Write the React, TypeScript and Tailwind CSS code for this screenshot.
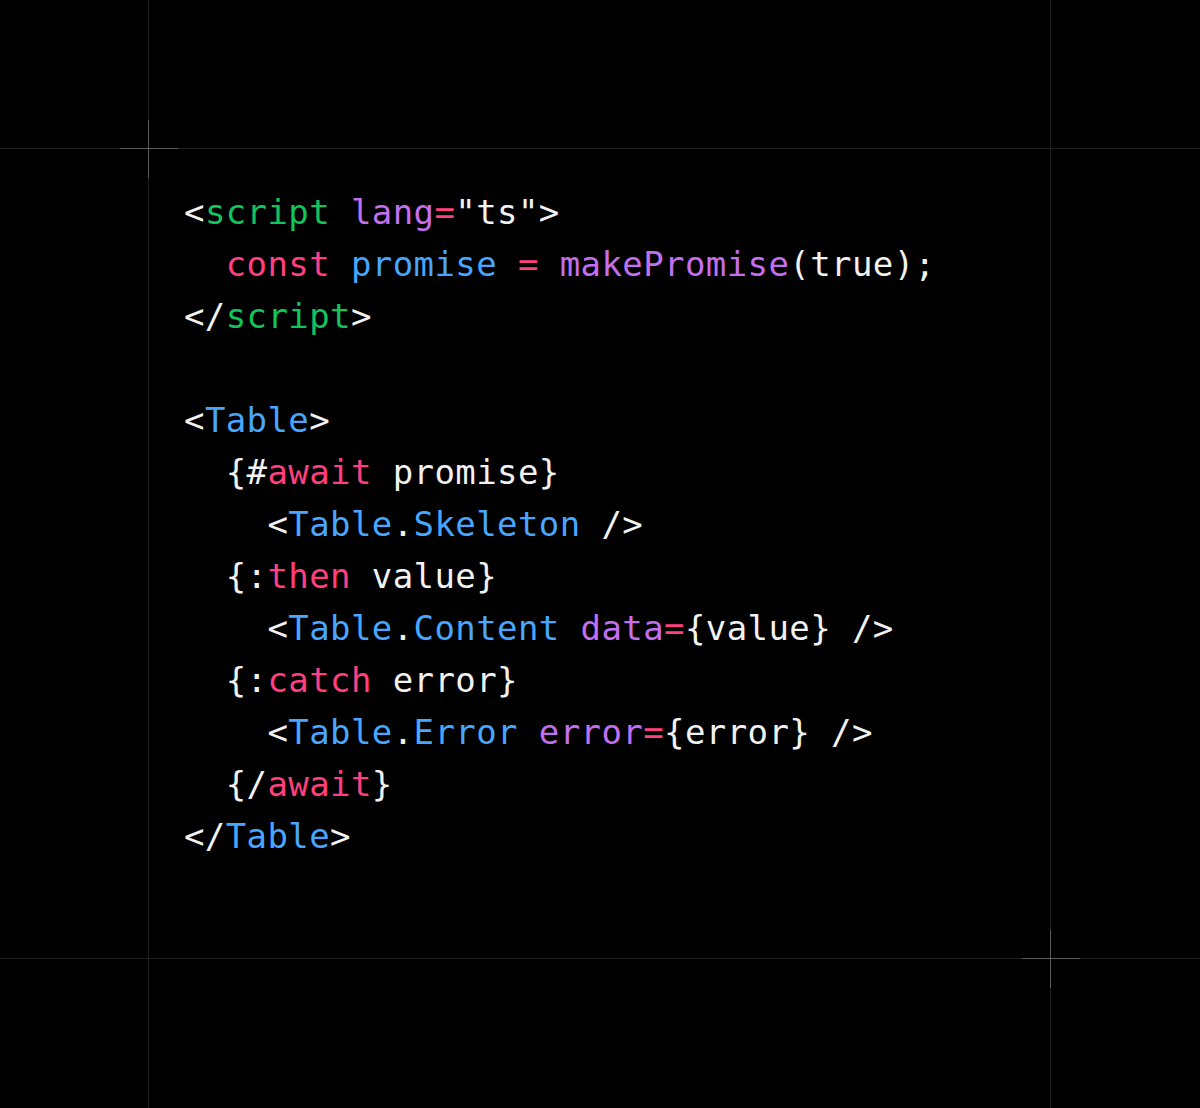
import type { ReactNode } from 'react';

const W = 'text-[#f2f2f2]';
const G = 'text-[#12c45c]';
const P = 'text-[#c26ff0]';
const K = 'text-[#ff3f7f]';
const B = 'text-[#47a6ff]';

type Tok = [string, string];

const lines: Tok[][] = [
  [[W, '<'], [G, 'script'], [W, ' '], [P, 'lang'], [K, '='], [W, '"ts">']],
  [[W, '  '], [K, 'const'], [W, ' '], [B, 'promise'], [W, ' '], [K, '='], [W, ' '], [P, 'makePromise'], [W, '(true);']],
  [[W, '</'], [G, 'script'], [W, '>']],
  [],
  [[W, '<'], [B, 'Table'], [W, '>']],
  [[W, '  {#'], [K, 'await'], [W, ' promise}']],
  [[W, '    <'], [B, 'Table'], [W, '.'], [B, 'Skeleton'], [W, ' />']],
  [[W, '  {:'], [K, 'then'], [W, ' value}']],
  [[W, '    <'], [B, 'Table'], [W, '.'], [B, 'Content'], [W, ' '], [P, 'data'], [K, '='], [W, '{value} />']],
  [[W, '  {:'], [K, 'catch'], [W, ' error}']],
  [[W, '    <'], [B, 'Table'], [W, '.'], [B, 'Error'], [W, ' '], [P, 'error'], [K, '='], [W, '{error} />']],
  [[W, '  {/'], [K, 'await'], [W, '}']],
  [[W, '</'], [B, 'Table'], [W, '>']],
];

// corner marker drawn over the frame lines
function Cross({ className }: { className: string }) {
  return (
    <svg className={`absolute ${className}`} width="58" height="58" viewBox="0 0 58 58">
      <path d="M0 28.5H58M28.5 0V58" stroke="#5c5c5c" strokeWidth="1" />
    </svg>
  );
}

function Line({ toks }: { toks: Tok[] }): ReactNode {
  return (
    <div className="h-[52px] leading-[52px] whitespace-pre">
      {toks.length === 0 ? ' ' : toks.map(([c, t], i) => (
        <span key={i} className={c}>{t}</span>
      ))}
    </div>
  );
}

function EdgeRow() {
  return (
    <div className="flex flex-1">
      <div className="w-[148px]" />
      <div className="w-[903px] border-x border-[#1e1e1e]" />
      <div className="flex-1" />
    </div>
  );
}

export default function App() {
  return (
    <div className="flex flex-col w-[1200px] h-[1108px] bg-black overflow-hidden">
      <div className="h-[148px] flex">
        <EdgeRow />
      </div>
      <div className="h-[811px] flex border-y border-[#1e1e1e]">
        <div className="w-[148px]" />
        <div className="relative w-[903px] border-x border-[#1e1e1e] pt-[37px] pl-[35px]">
          <Cross className="-left-[29px] -top-[29px]" />
          <Cross className="-right-[30px] -bottom-[30px]" />
          <div
            className="text-[34px] tracking-[0.4px]"
            style={{ fontFamily: '"DejaVu Sans Mono", "Liberation Mono", monospace' }}
          >
            {lines.map((l, i) => (
              <Line key={i} toks={l} />
            ))}
          </div>
        </div>
        <div className="flex-1" />
      </div>
      <div className="flex-1 flex">
        <EdgeRow />
      </div>
    </div>
  );
}
